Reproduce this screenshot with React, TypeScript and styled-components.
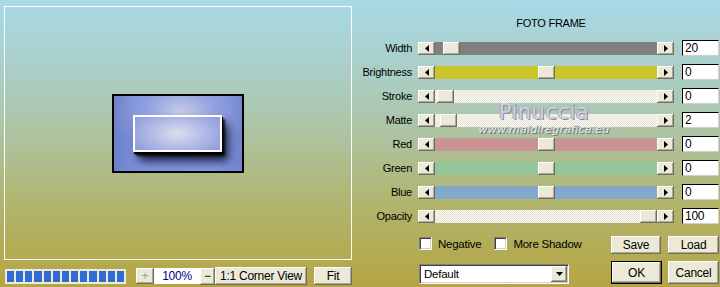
import React from 'react';
import styled, { createGlobalStyle, css } from 'styled-components';

const Global = createGlobalStyle`
  html, body { margin: 0; padding: 0; }
  body {
    width: 720px; height: 287px; overflow: hidden;
    font-family: "Liberation Sans", Arial, sans-serif;
    font-size: 11px; letter-spacing: -0.25px; color: #000;
  }
`;

const raised = css`
  background: #ece9d8;
  box-shadow: inset -1px -1px #716f64, inset 1px 1px #ffffff, inset -2px -2px #aca899;
`;

const sunken = css`
  background: #ffffff;
  border: 1px solid;
  border-color: #7f7f7f #ffffff #ffffff #7f7f7f;
  box-shadow: inset 1px 1px #404040, inset -1px -1px #d4d0c8;
`;

const Window = styled.div`
  position: relative;
  width: 720px; height: 287px; display: flex; overflow: hidden;
  background: linear-gradient(180deg, #a8d9e7 0%, #acc9b6 36%, #aec096 52%, #b1b46c 72%, #b5a542 100%);
`;

const LeftPane = styled.div`
  width: 356px; flex: none; box-sizing: border-box; padding: 6px 0 0 4px;
  display: flex; flex-direction: column;
`;

const Preview = styled.div`
  width: 348px; height: 254px; box-sizing: border-box;
  border: 1px solid #ffffff;
  display: flex; align-items: center; justify-content: center;
`;

const Photo = styled.div`
  width: 132px; height: 79px; box-sizing: border-box;
  border: 2px solid #000;
  padding: 19px 0 0 19px;
  background:
    radial-gradient(ellipse 55% 60% at 52% 20%, rgba(205,208,232,0.9) 0%, rgba(160,170,225,0.5) 50%, rgba(120,140,220,0) 100%),
    linear-gradient(90deg, #6c80c8 0%, #7d92dc 20%, #8196de 80%, #6f84cc 100%);
`;

const InnerFrame = styled.div`
  width: 89px; height: 37px; box-sizing: border-box;
  border: 2px solid #fff;
  background: radial-gradient(ellipse 60% 80% at 50% 50%, #dcdeee 0%, #b4bce6 50%, #8d9ddf 100%);
  box-shadow: 1px 2px 0 #000, 3px 4px 2px rgba(0,0,0,0.8), 6px 9px 9px rgba(10,10,30,0.85);
`;

const Toolbar = styled.div`
  height: 18px; margin-top: 7px; padding-left: 1px;
  display: flex; align-items: center;
`;

const Progress = styled.div`
  width: 121px; height: 15px; box-sizing: border-box;
  background: #ecebdc; padding: 2px 2px; display: flex; gap: 2px;
  margin-right: 10px;
`;

const Block = styled.div`
  flex: 1; background: #2f6bd0;
`;

const Btn = styled.div<{ $w: number; $h?: number; $disabled?: boolean; $default?: boolean }>`
  ${raised};
  width: ${(p) => p.$w}px; height: ${(p) => p.$h ?? 18}px;
  box-sizing: border-box; flex: none;
  display: flex; align-items: center; justify-content: center;
  font-size: 12px;
  color: ${(p) => (p.$disabled ? '#a0a090' : '#000')};
  ${(p) =>
    p.$default &&
    css`
      border: 1px solid #000;
    `}
`;

const ZoomField = styled.div`
  width: 46px; height: 16px; background: #fff;
  display: flex; align-items: center; justify-content: center;
  color: #000080; font-size: 12px;
`;

const Gap = styled.div<{ $w: number }>`
  width: ${(p) => p.$w}px; flex: none;
`;

const RightPane = styled.div`
  flex: 1; padding-top: 14px; display: flex; flex-direction: column;
`;

const Title = styled.div`
  line-height: 18px; text-align: center; padding-left: 26px; margin-bottom: 4px;
  font-size: 11px;
`;

const Row = styled.div`
  height: 24px; display: flex; align-items: center;
`;

const Label = styled.div`
  width: 62px; flex: none; box-sizing: border-box; padding-right: 6px; text-align: right;
  font-size: 11px;
`;

const Slider = styled.div`
  width: 256px; height: 13px; flex: none; display: flex; margin-right: 8px;
`;

const Arrow = styled.div`
  ${raised};
  width: 17px; height: 13px; flex: none;
  display: flex; align-items: center; justify-content: center;
`;

const Track = styled.div<{ $color: string; $dither?: boolean }>`
  position: relative; flex: 1; height: 13px;
  background-color: ${(p) => p.$color};
  ${(p) =>
    p.$dither &&
    css`
      background-image: repeating-conic-gradient(#e6e4d8 0% 25%, #f8f7f0 0% 50%);
      background-size: 2px 2px;
    `}
`;

const Thumb = styled.div<{ $left: number }>`
  ${raised};
  position: absolute; top: 0; left: ${(p) => p.$left}px;
  width: 17px; height: 13px;
`;

const ValueBox = styled.div`
  width: 37px; height: 16px; flex: none; box-sizing: border-box;
  background: #fff;
  border: 1px solid; border-color: #000 #d4d0c8 #d4d0c8 #000;
  padding-left: 2px; font-size: 12px; line-height: 14px;
`;

const Bottom = styled.div`
  display: flex; margin-top: 6px;
`;

const LeftControls = styled.div`
  margin-left: 63px; width: 150px; flex: none; padding-top: 3px;
  display: flex; flex-direction: column; gap: 14px;
`;

const CheckRow = styled.div`
  display: flex; align-items: center; height: 13px; gap: 13px;
`;

const CheckItem = styled.label`
  display: flex; align-items: center; gap: 6px; white-space: nowrap; font-size: 11.5px;
`;

const Box = styled.span`
  ${sunken};
  width: 13px; height: 13px; box-sizing: border-box; display: inline-block;
`;

const Select = styled.div`
  ${sunken};
  width: 150px; height: 20px; box-sizing: border-box;
  display: flex; align-items: center; justify-content: space-between;
  padding: 1px 1px 1px 4px; font-size: 11.5px;
`;

const SelectArrow = styled.div`
  ${raised};
  width: 16px; height: 16px; display: flex; align-items: center; justify-content: center;
`;

const ButtonGrid = styled.div`
  margin-left: 42px; padding-top: 2px;
  display: grid; grid-template-columns: 50px 51px; column-gap: 7px; row-gap: 7px;
  grid-template-rows: 18px 23px;
`;

const Watermark = styled.div`
  position: absolute; left: 483px; top: 100px; width: 122px;
  display: flex; flex-direction: column; align-items: center;
  pointer-events: none;
`;

const WmName = styled.div`
  font-family: "DejaVu Sans", sans-serif; font-size: 21px; letter-spacing: 0.5px;
  color: #cfd1de;
  text-shadow: 1px 1px 0 #868aa2, -1px 0 0 #a4a8bc;
  line-height: 24px;
`;

const WmUrl = styled.div`
  font-family: "DejaVu Sans", sans-serif; font-size: 11px; letter-spacing: 0.2px;
  color: #e4e4e8; font-style: italic;
  text-shadow: 1px 1px 0 #6a6e80;
  line-height: 12px;
`;

const LeftTri = () => (
  <svg width="4" height="7" viewBox="0 0 4 7"><polygon points="4,0 4,7 0,3.5" fill="#000" /></svg>
);
const RightTri = () => (
  <svg width="4" height="7" viewBox="0 0 4 7"><polygon points="0,0 0,7 4,3.5" fill="#000" /></svg>
);
const DownTri = () => (
  <svg width="7" height="4" viewBox="0 0 7 4"><polygon points="0,0 7,0 3.5,4" fill="#000" /></svg>
);

type SliderDef = { label: string; color: string; dither?: boolean; left: number; value: string };

const sliders: SliderDef[] = [
  { label: 'Width', color: '#808080', left: 8, value: '20' },
  { label: 'Brightness', color: '#c9c52a', left: 103, value: '0' },
  { label: 'Stroke', color: '#f2f1e8', dither: true, left: 2, value: '0' },
  { label: 'Matte', color: '#f2f1e8', dither: true, left: 5, value: '2' },
  { label: 'Red', color: '#c99494', left: 103, value: '0' },
  { label: 'Green', color: '#93c79a', left: 103, value: '0' },
  { label: 'Blue', color: '#82a8ca', left: 103, value: '0' },
  { label: 'Opacity', color: '#f2f1e8', dither: true, left: 205, value: '100' },
];

export default function App() {
  return (
    <>
      <Global />
      <Window>
        <LeftPane>
          <Preview>
            <Photo>
              <InnerFrame />
            </Photo>
          </Preview>
          <Toolbar>
            <Progress>
              {Array.from({ length: 13 }).map((_, i) => (
                <Block key={i} />
              ))}
            </Progress>
            <Btn $w={18} $h={16} $disabled>+</Btn>
            <ZoomField>100%</ZoomField>
            <Btn $w={15} $h={17}>−</Btn>
            <Btn $w={92}>1:1 Corner View</Btn>
            <Gap $w={7} />
            <Btn $w={38}>Fit</Btn>
          </Toolbar>
        </LeftPane>
        <RightPane>
          <Title>FOTO FRAME</Title>
          {sliders.map((s) => (
            <Row key={s.label}>
              <Label>{s.label}</Label>
              <Slider>
                <Arrow><LeftTri /></Arrow>
                <Track $color={s.color} $dither={s.dither}>
                  <Thumb $left={s.left} />
                </Track>
                <Arrow><RightTri /></Arrow>
              </Slider>
              <ValueBox>{s.value}</ValueBox>
            </Row>
          ))}
          <Bottom>
            <LeftControls>
              <CheckRow>
                <CheckItem><Box />Negative</CheckItem>
                <CheckItem><Box />More Shadow</CheckItem>
              </CheckRow>
              <Select>
                <span>Default</span>
                <SelectArrow><DownTri /></SelectArrow>
              </Select>
            </LeftControls>
            <ButtonGrid>
              <Btn $w={50}>Save</Btn>
              <Btn $w={51}>Load</Btn>
              <Btn $w={51} $h={23} $default>OK</Btn>
              <Btn $w={51} $h={23}>Cancel</Btn>
            </ButtonGrid>
          </Bottom>
        </RightPane>
        <Watermark>
          <WmName>Pinuccia</WmName>
          <WmUrl>www.maidiregrafica.eu</WmUrl>
        </Watermark>
      </Window>
    </>
  );
}
